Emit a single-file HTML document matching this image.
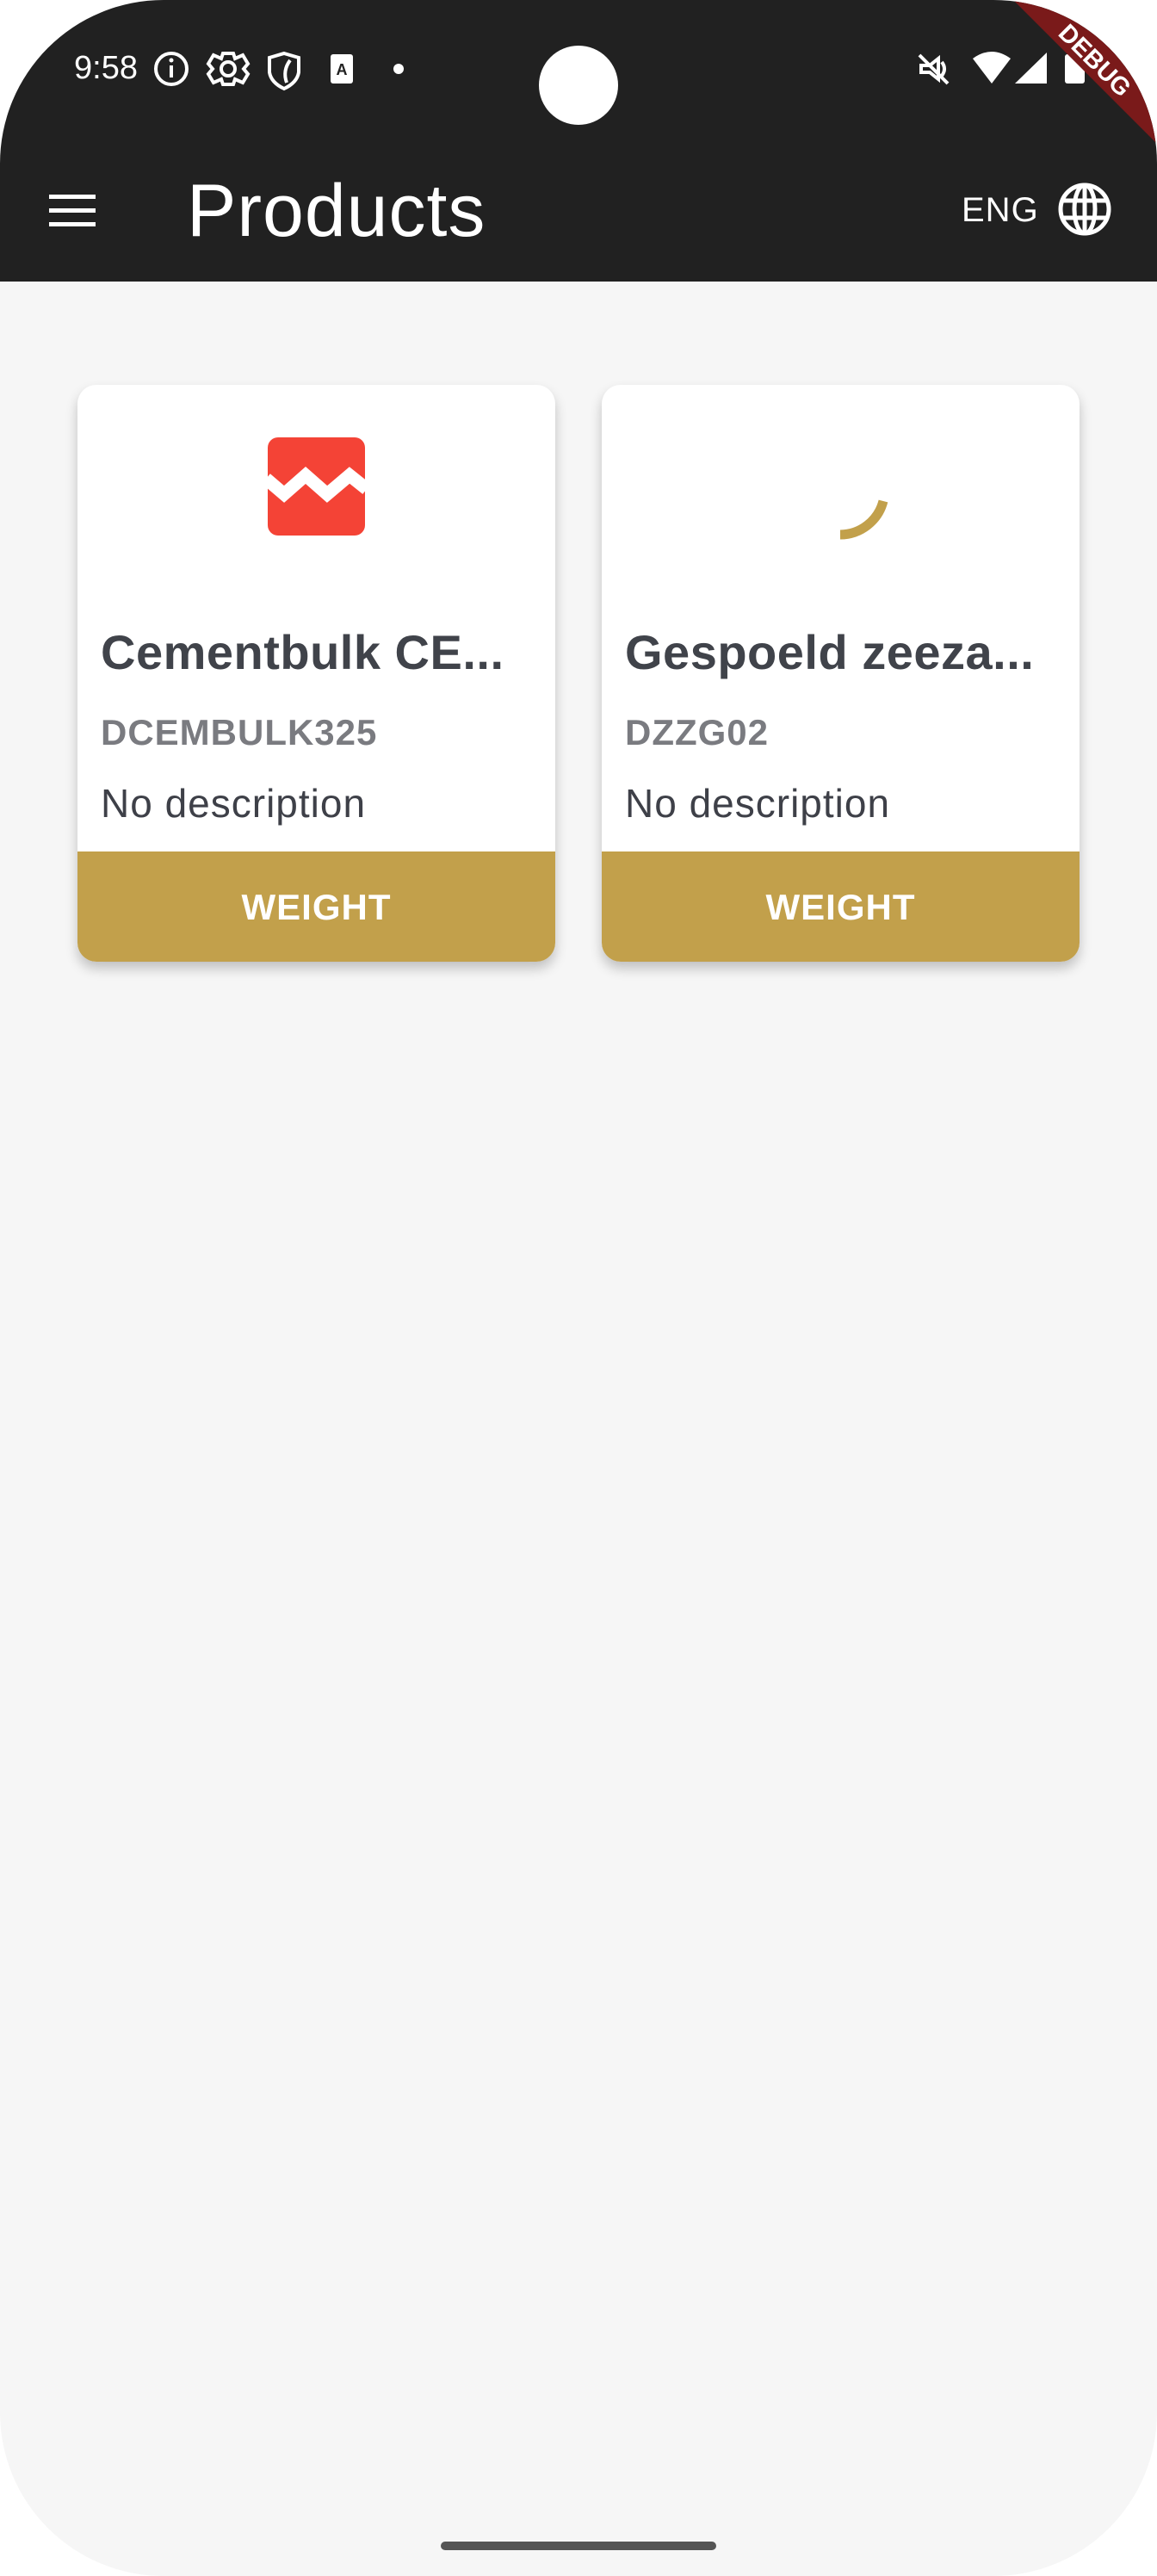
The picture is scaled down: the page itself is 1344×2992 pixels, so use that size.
<!DOCTYPE html>
<html><head><meta charset="utf-8"><style>
*{margin:0;padding:0;box-sizing:border-box}
html,body{width:1344px;height:2992px;background:#fff;overflow:hidden;font-family:"Liberation Sans",sans-serif}
.screen{position:absolute;left:0;top:0;width:1344px;height:2992px;border-radius:190px;overflow:hidden;background:#f6f6f6}
.bar{position:absolute;left:0;top:0;width:1344px;height:327px;background:#212121}
.time{position:absolute;left:86px;top:58px;color:#fff;font-size:38px}
.title{position:absolute;left:217px;top:196px;color:#fff;font-size:86px;font-weight:300;letter-spacing:1px}
.eng{position:absolute;left:1117px;top:222px;color:#fff;font-size:40px;letter-spacing:1px}
.card{position:absolute;top:447px;width:555px;height:670px;background:#fff;border-radius:22px;box-shadow:0 8px 14px rgba(0,0,0,.22);overflow:hidden}
.name,.code,.desc{position:absolute;left:27px;line-height:1;white-space:nowrap}
.name{top:283px;font-size:56px;font-weight:bold;color:#40434a;letter-spacing:.5px}
.code{top:383px;font-size:42px;font-weight:bold;color:#7a7b80;letter-spacing:1px}
.desc{top:463px;font-size:46px;color:#3e4048;letter-spacing:1px}
.btn{position:absolute;left:0;top:542px;width:555px;height:128px;background:#c2a04b;color:#fff;font-size:42px;font-weight:bold;text-align:center;line-height:130px;letter-spacing:1px}
.home{position:absolute;left:512px;top:2952px;width:320px;height:10px;border-radius:5px;background:#555}
</style></head><body>
<div class="screen">
<div class="bar"></div>
<div class="time">9:58</div>
<svg style="position:absolute;left:0;top:0" width="1344" height="340">
 <g fill="none" stroke="#fff" stroke-width="4">
  <circle cx="199" cy="80" r="18"/>
  <line x1="199" y1="76" x2="199" y2="90"/>
  <circle cx="265" cy="80" r="8"/>
  <path d="M259 62 L271 62 L273 68 L282 64 L288 74 L283 80 L288 86 L282 96 L273 92 L271 98 L259 98 L257 92 L248 96 L242 86 L247 80 L242 74 L248 64 L257 68Z" stroke-width="4"/>
  <path d="M330 62 L347 67 L347 84 Q345 96 330 103 Q315 96 313 84 L313 67Z"/>
  <path d="M337 70 Q328 82 333 96"/>
 </g>
 <circle cx="199" cy="70" r="2.5" fill="#fff"/>
 <rect x="384" y="63" width="26" height="34" rx="3" fill="#fff"/>
 <text x="397" y="87" font-size="18" font-weight="bold" fill="#212121" text-anchor="middle" font-family="Liberation Sans">A</text>
 <circle cx="463" cy="80" r="6" fill="#fff"/>
 <circle cx="672" cy="99" r="46" fill="#fff"/>
 <g stroke="#fff" stroke-width="4" fill="none"><path d="M1070 76 L1080 76 L1090 68 L1090 92 L1080 84 L1070 84Z"/><path d="M1094 72 Q1100 80 1094 88"/><line x1="1068" y1="64" x2="1101" y2="97"/></g>
 <path d="M1130 68 Q1152 52 1174 68 L1152 97Z" fill="#fff"/>
 <path d="M1216 61 L1216 97 L1179 97Z" fill="#fff"/>
 <rect x="1237" y="63" width="23" height="34" rx="3" fill="#fff"/>
 <polygon points="1177,0 1240,0 1344,104 1344,167" fill="#7a1a1a"/>
 <text x="1272" y="80" transform="rotate(45 1272 70)" font-size="29" font-weight="bold" fill="#fff" text-anchor="middle" font-family="Liberation Sans">DEBUG</text>
 <g fill="#fff"><rect x="57" y="226" width="54" height="5"/><rect x="57" y="242" width="54" height="5"/><rect x="57" y="258" width="54" height="5"/></g>
 <g fill="none" stroke="#fff" stroke-width="5"><circle cx="1260" cy="243" r="28"/><ellipse cx="1260" cy="243" rx="12" ry="28"/><line x1="1260" y1="215" x2="1260" y2="271"/><line x1="1234" y1="233" x2="1286" y2="233"/><line x1="1234" y1="253" x2="1286" y2="253"/></g>
</svg>
<div class="title">Products</div>
<div class="eng">ENG</div>

<div class="card" style="left:90px">
 <svg style="position:absolute;left:221px;top:61px" width="113" height="114">
  <rect width="113" height="114" rx="12" fill="#f44336"/>
  <polyline points="-2,48 19,66 44,44 69,66 95,44 115,60" fill="none" stroke="#fff" stroke-width="15"/>
 </svg>
 <div class="name">Cementbulk CE...</div>
 <div class="code">DCEMBULK325</div>
 <div class="desc">No description</div>
 <div class="btn">WEIGHT</div>
</div>
<div class="card" style="left:699px">
 <svg style="position:absolute;left:0;top:0" width="555" height="300">
  <path d="M277 174 A52 52 0 0 0 327 135" fill="none" stroke="#c2a04b" stroke-width="11"/>
 </svg>
 <div class="name">Gespoeld zeeza...</div>
 <div class="code">DZZG02</div>
 <div class="desc">No description</div>
 <div class="btn">WEIGHT</div>
</div>
<div class="home"></div>
</div>
</body></html>
